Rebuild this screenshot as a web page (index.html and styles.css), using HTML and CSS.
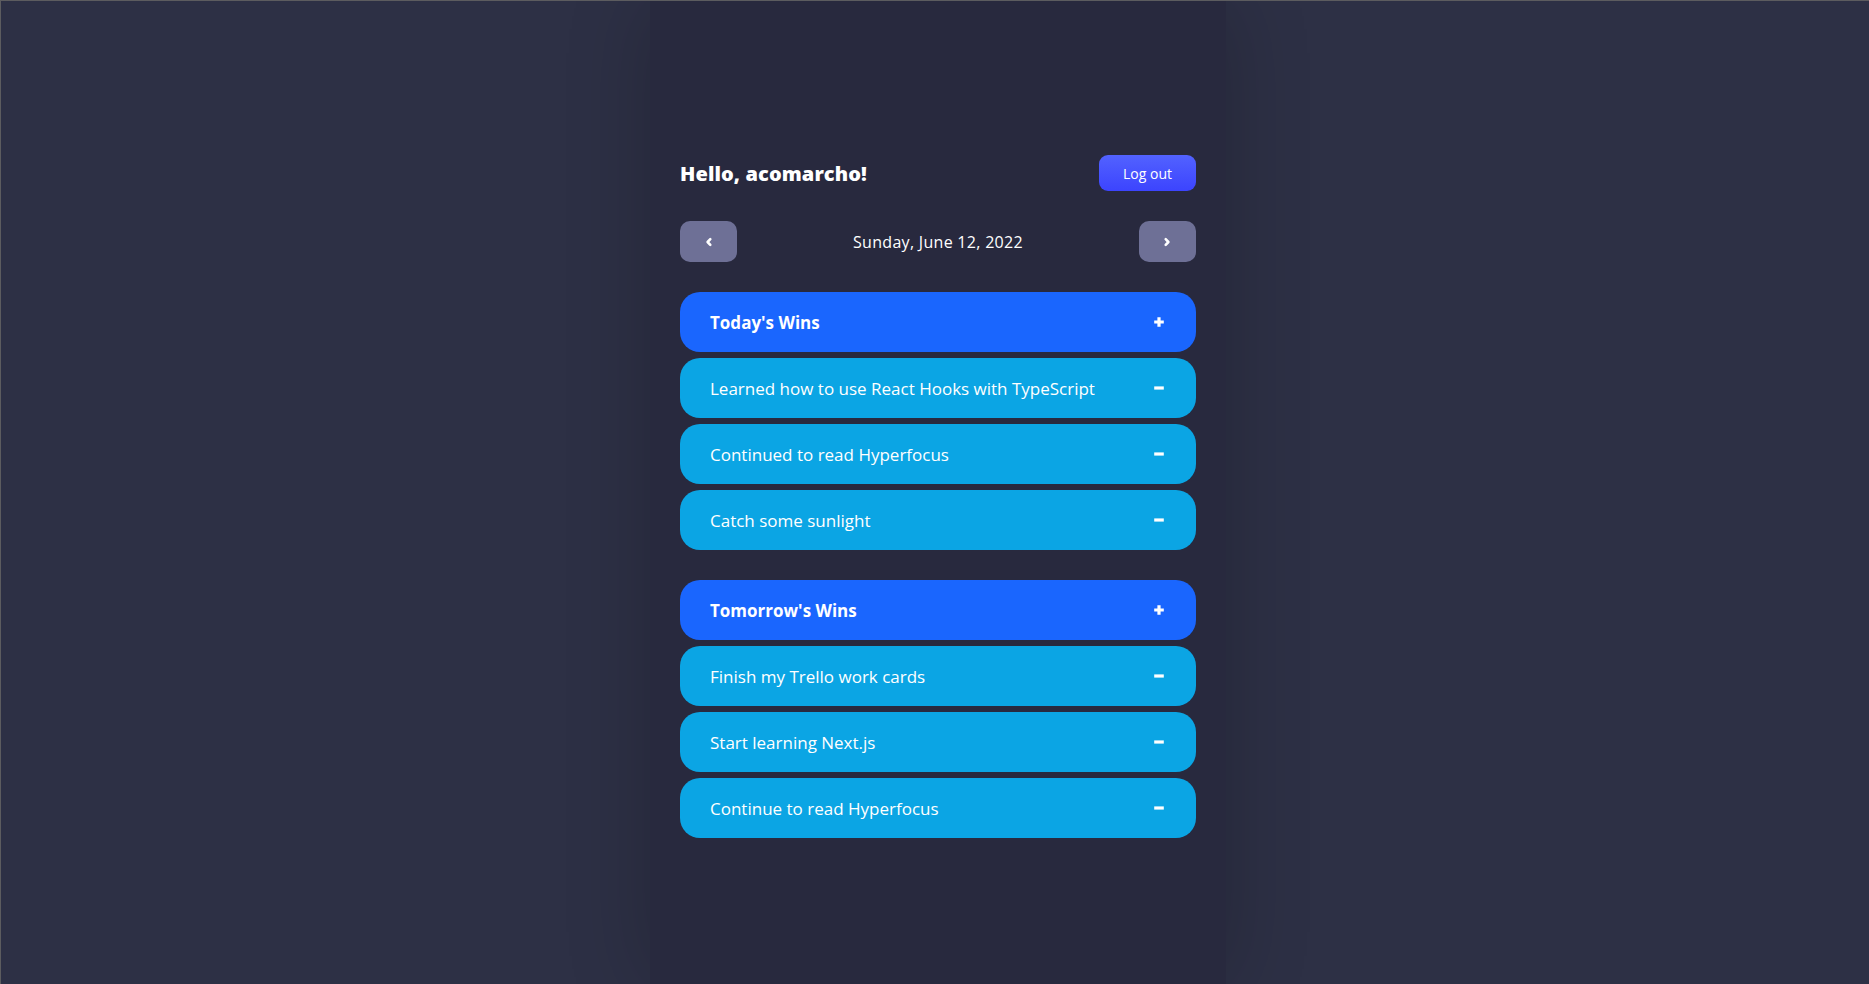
FILE: index.html
```html
<!DOCTYPE html>
<html lang="en">
<head>
<meta charset="utf-8">
<title>Daily Wins</title>
<link rel="stylesheet" href="styles.css">
</head>
<body>
<div class="page">
  <main class="column">
    <header class="top">
      <h1 class="hello">Hello, acomarcho!</h1>
      <button class="logout">Log out</button>
    </header>
    <nav class="datenav">
      <button class="navbtn" aria-label="Previous day">
        <svg width="10" height="10" viewBox="0 0 10 10"><path d="M6.3 2.2 L3.6 5 L6.3 7.8" fill="none" stroke="#fff" stroke-width="2.6" stroke-linecap="round" stroke-linejoin="round"/></svg>
      </button>
      <span class="date">Sunday, June 12, 2022</span>
      <button class="navbtn" aria-label="Next day">
        <svg width="10" height="10" viewBox="0 0 10 10"><path d="M3.7 2.2 L6.4 5 L3.7 7.8" fill="none" stroke="#fff" stroke-width="2.6" stroke-linecap="round" stroke-linejoin="round"/></svg>
      </button>
    </nav>

    <section class="group">
      <div class="card head">
        <span class="label">Today's Wins</span>
        <svg class="ico" width="12" height="12" viewBox="0 0 12 12"><path d="M6 1.2 V10.8 M1.2 6 H10.8" stroke="#fff" stroke-width="3.2"/></svg>
      </div>
      <div class="card item">
        <span class="label">Learned how to use React Hooks with TypeScript</span>
        <svg class="ico" width="12" height="12" viewBox="0 0 12 12"><path d="M1.2 6 H10.8" stroke="#fff" stroke-width="3.2"/></svg>
      </div>
      <div class="card item">
        <span class="label">Continued to read Hyperfocus</span>
        <svg class="ico" width="12" height="12" viewBox="0 0 12 12"><path d="M1.2 6 H10.8" stroke="#fff" stroke-width="3.2"/></svg>
      </div>
      <div class="card item">
        <span class="label">Catch some sunlight</span>
        <svg class="ico" width="12" height="12" viewBox="0 0 12 12"><path d="M1.2 6 H10.8" stroke="#fff" stroke-width="3.2"/></svg>
      </div>
    </section>

    <section class="group">
      <div class="card head">
        <span class="label">Tomorrow's Wins</span>
        <svg class="ico" width="12" height="12" viewBox="0 0 12 12"><path d="M6 1.2 V10.8 M1.2 6 H10.8" stroke="#fff" stroke-width="3.2"/></svg>
      </div>
      <div class="card item">
        <span class="label">Finish my Trello work cards</span>
        <svg class="ico" width="12" height="12" viewBox="0 0 12 12"><path d="M1.2 6 H10.8" stroke="#fff" stroke-width="3.2"/></svg>
      </div>
      <div class="card item">
        <span class="label">Start learning Next.js</span>
        <svg class="ico" width="12" height="12" viewBox="0 0 12 12"><path d="M1.2 6 H10.8" stroke="#fff" stroke-width="3.2"/></svg>
      </div>
      <div class="card item">
        <span class="label">Continue to read Hyperfocus</span>
        <svg class="ico" width="12" height="12" viewBox="0 0 12 12"><path d="M1.2 6 H10.8" stroke="#fff" stroke-width="3.2"/></svg>
      </div>
    </section>
  </main>
</div>
</body>
</html>
```
FILE: styles.css
```css
* { box-sizing: border-box; }
html, body { height: 100%; }
body {
  margin: 0;
  background: #2d3045;
  border-top: 1px solid #5c5c5f;
  border-left: 1px solid #5c5c5f;
  font-family: "Open Sans", "Noto Sans", sans-serif;
  color: #fff;
  overflow: hidden;
}
.page {
  display: flex;
  justify-content: center;
  height: 100%;
  padding-left: 6px;
}
.column {
  width: 576px;
  height: 100%;
  background: #28293e;
  box-shadow: 0 0 80px rgba(0, 0, 0, 0.2);
  padding: 154px 30px 0;
  display: flex;
  flex-direction: column;
}
.top {
  display: flex;
  justify-content: space-between;
  align-items: center;
  height: 36px;
}
.hello {
  margin: 0;
  font-size: 20px;
  font-weight: 800;
  letter-spacing: 0.1px;
}
.logout {
  width: 97px;
  height: 36px;
  border: 0;
  border-radius: 9px;
  background: linear-gradient(180deg, #5262ff, #3c44fe);
  color: #fff;
  font-family: inherit;
  font-size: 14px;
  padding: 0;
}
.datenav {
  display: flex;
  justify-content: space-between;
  align-items: center;
  margin-top: 30px;
  height: 41px;
}
.navbtn {
  width: 57px;
  height: 41px;
  border: 0;
  border-radius: 10px;
  background: #6e7096;
  display: flex;
  align-items: center;
  justify-content: center;
  padding: 0;
}
.date {
  font-size: 16px;
  letter-spacing: 0.3px;
}
.group {
  display: flex;
  flex-direction: column;
  gap: 6px;
  margin-top: 30px;
}
.card {
  height: 60px;
  border-radius: 20px;
  display: flex;
  align-items: center;
  justify-content: space-between;
  padding: 0 31px 0 30px;
  font-size: 17px;
}
.head {
  background: #1a66fe;
  font-weight: 700;
}
.item {
  background: #0ba5e4;
}
.ico { display: block; }
```
